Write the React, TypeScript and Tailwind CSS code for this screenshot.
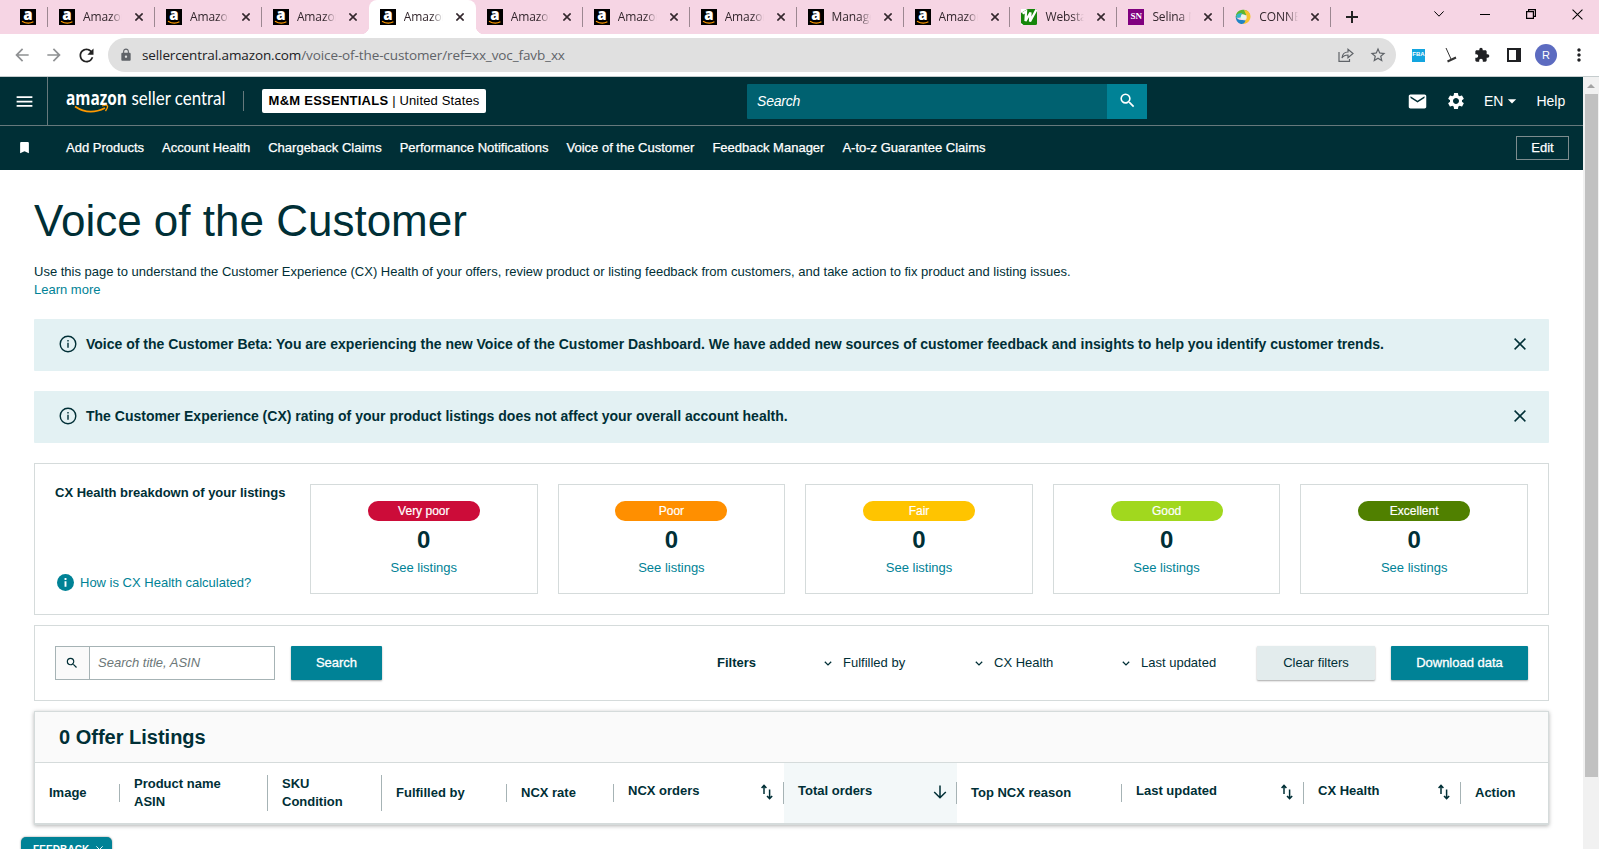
import type { ReactNode } from "react";
import clsx from "clsx";
import {
  MdArrowBack,
  MdArrowForward,
  MdRefresh,
  MdLock,
  MdStarBorder,
  MdExtension,
  MdMoreVert,
  MdMenu,
  MdBookmark,
  MdSearch,
  MdEmail,
  MdSettings,
  MdArrowDropDown,
} from "react-icons/md";

type TabIcon = "amazon" | "webstaurant" | "selina" | "connect";

const TABS: { title: string; icon: TabIcon; active?: boolean; noDivider?: boolean }[] = [
  { title: "Amazon", icon: "amazon" },
  { title: "Amazon", icon: "amazon" },
  { title: "Amazon", icon: "amazon", noDivider: true },
  { title: "Amazon", icon: "amazon", active: true },
  { title: "Amazon", icon: "amazon" },
  { title: "Amazon", icon: "amazon" },
  { title: "Amazon", icon: "amazon" },
  { title: "Manage", icon: "amazon" },
  { title: "Amazon", icon: "amazon" },
  { title: "Webstau", icon: "webstaurant" },
  { title: "Selina N", icon: "selina" },
  { title: "CONNE", icon: "connect" },
];

const NAV_LINKS = [
  "Add Products",
  "Account Health",
  "Chargeback Claims",
  "Performance Notifications",
  "Voice of the Customer",
  "Feedback Manager",
  "A-to-z Guarantee Claims",
];

const RATINGS = [
  { label: "Very poor", color: "bg-[#cc0c39]" },
  { label: "Poor", color: "bg-[#ff8f00]" },
  { label: "Fair", color: "bg-[#ffc400]" },
  { label: "Good", color: "bg-[#a1d81e]" },
  { label: "Excellent", color: "bg-[#508000]" },
];

function Favicon({ icon }: { icon: TabIcon }) {
  if (icon === "selina") {
    return (
      <span className="flex h-4 w-4 shrink-0 items-center justify-center bg-[#80007f] font-['Liberation_Serif',serif] text-[9px] font-bold text-white">
        SN
      </span>
    );
  }
  if (icon === "webstaurant") {
    return (
      <svg viewBox="0 0 16 16" className="h-4 w-4 shrink-0">
        <rect width="16" height="16" rx="1.500" fill="#16860a" />
        <path d="M0 4L6.500 0H0z" fill="#fff" />
        <path d="M1.500 4.500L5 2.500 4.500 12 9.500 3.500 9 12.500 15.500.5" fill="none" stroke="#fff" strokeWidth="2.300" />
        <path d="M0 14l2.500 2H0z" fill="#fff" />
      </svg>
    );
  }
  if (icon === "connect") {
    return (
      <svg viewBox="0 0 16 16" className="h-4 w-4 shrink-0">
        <path d="M1 9C0 4 4 0 9 .8c3 .3 4.500 2 5.500 4L10 6.500 7 5 3 7z" fill="#5cb531" />
        <path d="M9 1c4 0 6.500 3 6.500 6.500C15.500 12 12 15 8 15l1-3c3-1 3.500-4 2-6.500z" fill="#f5c32c" />
        <path d="M.8 7C2 10 4 11.500 7.500 11l3 .5C10 14 8 15.500 6 15 2.500 14 .5 11 .8 7z" fill="#1f83c4" />
        <path d="M1 6.500Q3 3.500 7 4L5.500 8.500 2.500 9z" fill="#35b5c9" />
        <circle cx="8.500" cy="8" r="2.600" fill="#e9f5ef" />
      </svg>
    );
  }
  return (
    <svg viewBox="0 0 16 16" className="h-4 w-4 shrink-0 overflow-visible">
      <rect width="16" height="16" />
      <text x="8" y="11.2" textAnchor="middle" fill="#fff" fontFamily="Open Sans, sans-serif" fontWeight="800" fontSize="15">
        a
      </text>
      <path d="M2 12.2q6 3.6 11.4.6" fill="none" stroke="#f90" strokeWidth="1.2" />
    </svg>
  );
}

function Cross({ className, width = 1.5 }: { className?: string; width?: number }) {
  return (
    <svg viewBox="0 0 12 12" className={className} fill="none" stroke="currentColor" strokeWidth={width}>
      <path d="M.6.6l10.8 10.8M11.4.6L.6 11.4" />
    </svg>
  );
}

function TabStrip() {
  return (
    <div className="flex h-[34px] bg-[#f6d5e4] font-['Open_Sans',sans-serif] text-[12px] text-[#33272d]">
      <div className="flex w-[48px] items-center pl-5">
        <Favicon icon="amazon" />
        <span className="ml-[11px] h-5 w-px shrink-0 bg-[#9c8791]" />
      </div>
      {TABS.map((tab, i) => (
        <div
          key={i}
          className={clsx(
            "relative flex w-[106.95px] shrink-0 items-center pl-[11px]",
            tab.active && "rounded-t-lg bg-white"
          )}
        >
          {tab.active && (
            <>
              <span className="absolute bottom-0 -left-2 h-2 w-2 bg-[radial-gradient(circle_at_0_0,#f6d5e4_8px,#fff_8.5px)]" />
              <span className="absolute -right-2 bottom-0 h-2 w-2 bg-[radial-gradient(circle_at_100%_0,#f6d5e4_8px,#fff_8.5px)]" />
            </>
          )}
          <Favicon icon={tab.icon} />
          <span className="ml-2 w-[39px] overflow-hidden whitespace-nowrap tracking-[-0.1px] [mask-image:linear-gradient(to_right,#000_70%,transparent)]">
            {tab.title}
          </span>
          <Cross className="ml-[13px] h-2 w-2 shrink-0" width={2.4} />
          {!tab.active && !tab.noDivider && (
            <span className="absolute right-0 h-5 w-px bg-[#9c8791]" />
          )}
        </div>
      ))}
      <svg viewBox="0 0 12 12" className="ml-[15px] h-3 w-3 self-center" stroke="#222" strokeWidth="2">
        <path d="M6 0v12M0 6h12" />
      </svg>
      <div className="ml-auto flex h-7 items-center pr-4 text-black">
        <svg viewBox="0 0 10 6" className="h-1.5 w-2.5" fill="none" stroke="currentColor" strokeWidth="1">
          <path d="M.4.4L5 5.2 9.6.4" />
        </svg>
        <span className="ml-9 h-px w-2.5 bg-black" />
        <svg viewBox="0 0 10 10" className="ml-9 h-2.5 w-2.5" fill="none" stroke="currentColor" strokeWidth="1.2">
          <path d="M.6 2.6h6.8v6.8H.6zM2.6 2.6v-2h6.8v6.8H7.4" />
        </svg>
        <Cross className="ml-9 h-[11px] w-[11px]" width={1.1} />
      </div>
    </div>
  );
}

function Toolbar() {
  return (
    <div className="flex h-[43px] items-center border-b border-[#c5cccd] bg-white pl-3">
      <MdArrowBack className="h-5 w-5 text-[#8f9193]" />
      <MdArrowForward className="ml-3 h-5 w-5 text-[#8f9193]" />
      <MdRefresh className="ml-3 h-[21px] w-[21px] text-[#222]" />
      <div className="ml-[11px] flex h-[34px] w-[1288px] items-center rounded-full bg-[#e0e0e0] pr-[9px] pl-[11px] font-['Open_Sans',sans-serif]">
        <MdLock className="h-[14px] w-[14px] text-[#5f6368]" />
        <span className="ml-[9px] text-[13.5px] tracking-[-0.11px] text-[#202124]">
          sellercentral.amazon.com
          <span className="text-[#5f6368]">/voice-of-the-customer/ref=xx_voc_favb_xx</span>
        </span>
        <svg viewBox="0 0 16 16" className="mr-[15px] ml-auto h-4 w-4" fill="none" stroke="#5f6368" strokeWidth="1.2">
          <path d="M1 5v9.4h10.500V12" />
          <path d="M4 11c.4-4 2.600-6 6-6V2.200l5 4.300-5 4.200V8C7.600 8 5.500 8.600 4 11z" />
        </svg>
        <MdStarBorder className="h-4.5 w-4.5 text-[#5f6368]" />
      </div>
      <span className="ml-4 flex h-[13px] w-[13px] items-start justify-center bg-[#13a5df] pt-px font-['Liberation_Sans',sans-serif] text-[6px] leading-[8px] font-bold text-white">
        FBA
      </span>
      <svg viewBox="0 0 12 16" className="ml-5 h-4 w-3" fill="none" stroke="#333">
        <path d="M1 1l5 11" strokeWidth="1" />
        <path d="M2.500 14.500l8.500-4" strokeWidth="2" />
      </svg>
      <MdExtension className="ml-[17px] h-4 w-4 text-[#1f2023]" />
      <span className="ml-[17px] h-[14px] w-[14px] border-2 border-r-[5px] border-[#1f2023]" />
      <span className="ml-[14px] flex h-[22px] w-[22px] items-center justify-center rounded-full bg-[#5c6bc0] font-['Liberation_Sans',sans-serif] text-[11px] text-white">
        R
      </span>
      <MdMoreVert className="ml-3 h-5 w-5 text-[#1f2023]" />
    </div>
  );
}

function SellerLogo() {
  return (
    <svg viewBox="0 0 162 28" className="ml-[18px] h-7 w-[162px] shrink-0 overflow-visible" fill="#fff">
      <text x="0" y="18" fontFamily="Open Sans, sans-serif" fontSize="19" fontWeight="700" textLength="61" lengthAdjust="spacingAndGlyphs">
        amazon
      </text>
      <text x="65.500" y="18" fontFamily="Lato, sans-serif" fontSize="20" textLength="94" lengthAdjust="spacingAndGlyphs">
        seller central
      </text>
      <path d="M9 19.500q14 9.500 30 1.500" fill="none" stroke="#f90" strokeWidth="1.800" />
      <path d="M36 19q5-1.500 5.500 0t-2 5" fill="none" stroke="#f90" strokeWidth="1.300" />
    </svg>
  );
}

function SiteHeader() {
  return (
    <header className="bg-[#002f36] text-white">
      <div className="flex h-[49px] items-center border-b border-[#66797c]">
        <div className="flex h-full w-12 items-center justify-center border-r border-[#66797c] pl-px">
          <MdMenu className="h-[21px] w-[21px]" />
        </div>
        <SellerLogo />
        <span className="ml-[15px] h-5 w-px bg-[#66797c]" />
        <div className="ml-[18px] flex h-6 w-[224px] items-center justify-center rounded-[2px] bg-white text-[13px] tracking-[0.15px] whitespace-pre text-black">
          <b className="tracking-[0.25px]">M&amp;M ESSENTIALS</b> | United States
        </div>
        <div className="ml-[261px] flex h-[35px]">
          <div className="flex w-[360px] items-center rounded-l-[1px] bg-[#006170] pl-2.5 text-[14px] italic tracking-[-0.2px]">Search</div>
          <div className="flex w-10 items-center justify-center bg-[#008296] pb-px">
            <MdSearch className="h-[19px] w-[19px]" />
          </div>
        </div>
        <MdEmail className="ml-[260px] h-[21px] w-[21px]" />
        <MdSettings className="ml-[18px] h-5 w-5" />
        <span className="ml-[18px] text-[14px]">EN</span>
        <MdArrowDropDown className="-ml-px h-5 w-5" />
        <span className="ml-[14px] text-[14px]">Help</span>
      </div>
      <nav className="flex h-[44px] items-center pb-px text-[13px] [-webkit-text-stroke:0.25px_white]">
        <MdBookmark className="mr-[34px] ml-[17px] h-[15px] w-[15px]" />
        <div className="flex gap-[18px]">
          {NAV_LINKS.map((link) => (
            <a key={link}>{link}</a>
          ))}
        </div>
        <button className="mr-[14px] ml-auto h-6 w-[53px] border border-[#7d8c8e]">Edit</button>
      </nav>
    </header>
  );
}

function Banner({ children }: { children: ReactNode }) {
  return (
    <div className="mb-5 flex h-[52px] items-center rounded-[1px] bg-[#e3f1f3] pr-[23px] pb-0.5 pl-[25px]">
      <svg viewBox="0 0 18 18" className="h-[18px] w-[18px] shrink-0" fill="none" stroke="#002f36">
        <circle cx="9" cy="9" r="7.800" strokeWidth="1.400" />
        <path d="M9 7.800v5M9 5v1.500" strokeWidth="1.400" />
      </svg>
      <span className="ml-[9px] text-[14px] font-bold">{children}</span>
      <Cross className="ml-auto h-3 w-3" width={1.5} />
    </div>
  );
}

function HealthBreakdown() {
  return (
    <section className="flex h-[152px] border border-[#d5dbdb] p-5">
      <div className="flex w-[255px] shrink-0 flex-col justify-between">
        <h2 className="text-[13px] leading-[18px] font-bold">CX Health breakdown of your listings</h2>
        <div className="flex items-center pb-0.5 pl-0.5 text-[13px] text-[#008296]">
          <svg viewBox="0 0 16 16" className="mr-[6px] h-[17px] w-[17px]">
            <circle cx="8" cy="8" r="8" fill="#008296" />
            <path d="M8 3.800v1.900M8 6.900v5.200" stroke="#fff" strokeWidth="1.800" />
          </svg>
          How is CX Health calculated?
        </div>
      </div>
      <div className="grid grow grid-cols-5 gap-5">
        {RATINGS.map((rating) => (
          <div key={rating.label} className="flex flex-col items-center border border-[#d5dbdb] pt-4">
            <span className={clsx("h-5 w-28 rounded-full text-center text-[12px] leading-5 text-white [-webkit-text-stroke:0.2px_white]", rating.color)}>
              {rating.label}
            </span>
            <span className="mt-1 text-[24px] leading-[30px] font-bold">0</span>
            <a className="mt-1 text-[13px] leading-[18px] text-[#008296]">See listings</a>
          </div>
        ))}
      </div>
    </section>
  );
}

function FilterMenu({ label, className }: { label: string; className?: string }) {
  return (
    <div className={clsx("flex items-center", className)}>
      <svg viewBox="0 0 8 5" className="mr-[11px] h-[5px] w-2" fill="none" stroke="#002f36" strokeWidth="1.300">
        <path d="M.8.8L4 3.900 7.200.8" />
      </svg>
      {label}
    </div>
  );
}

function FilterBar() {
  return (
    <section className="mt-2.5 flex h-[76px] items-center border border-[#d5dbdb] px-5 text-[13px]">
      <div className="flex h-[34px] w-[220px] border border-[#a6b3b5]">
        <div className="flex w-[34px] items-center justify-center border-r border-[#a6b3b5] bg-[#fafafa] pr-px pb-px">
          <MdSearch className="h-[14px] w-[14px]" />
        </div>
        <div className="flex items-center pl-2 text-[#6c7778] italic">Search title, ASIN</div>
      </div>
      <button className="ml-4 h-[34px] w-[91px] rounded-[1px] bg-[#008296] text-white shadow-[0_1px_2px_rgba(0,0,0,0.35)] [-webkit-text-stroke:0.3px_white]">
        Search
      </button>
      <b className="ml-[335px] w-[107px]">Filters</b>
      <FilterMenu label="Fulfilled by" className="w-[151px]" />
      <FilterMenu label="CX Health" className="w-[147px]" />
      <FilterMenu label="Last updated" />
      <button className="ml-auto h-[34px] w-[118px] rounded-[1px] bg-[#e3eced] shadow-[0_1px_2px_rgba(0,0,0,0.35)]">
        Clear filters
      </button>
      <button className="ml-4 h-[34px] w-[137px] rounded-[1px] bg-[#008296] text-white shadow-[0_1px_2px_rgba(0,0,0,0.35)] [-webkit-text-stroke:0.3px_white]">
        Download data
      </button>
    </section>
  );
}

function SortArrows() {
  return (
    <svg viewBox="0 0 12 16" className="mt-0.5 mr-[10px] h-4 w-3" fill="none" stroke="#002f36" strokeWidth="1.500">
      <path d="M3 10V2M.6 4L3 1.400 5.400 4M8.600 5.500v8.500M6 12l2.600 2.600L11.200 12" />
    </svg>
  );
}

function Column({ label, width, sort, last }: { label: ReactNode; width: string; sort?: "both" | "down"; last?: boolean }) {
  return (
    <div className={clsx("flex h-full shrink-0 items-center", width, sort === "down" && "bg-[#f3f8f9]")}>
      <div
        className={clsx(
          "flex grow justify-between pl-[14px] leading-[18px]",
          !last && "border-r border-[#a6b3b5]",
          sort && "h-[22px]"
        )}
      >
        <span>{label}</span>
        {sort === "both" && <SortArrows />}
        {sort === "down" && (
          <svg viewBox="0 0 14 14" className="mt-[3px] mr-[9px] h-[14px] w-[14px]" fill="none" stroke="#002f36" strokeWidth="1.500">
            <path d="M7 .5v12M1.200 7L7 12.800 12.800 7" />
          </svg>
        )}
      </div>
    </div>
  );
}

function ListingsTable() {
  return (
    <section className="mt-2.5 border border-b-2 border-[#d5dbdb] shadow-[0_1px_4px_rgba(0,0,0,0.3)]">
      <h2 className="flex h-[51px] items-center border-b border-[#d5dbdb] bg-[#fafafa] pl-6 text-[20px] font-bold">0 Offer Listings</h2>
      <div className="flex h-[60px] items-center text-[13px] font-bold">
        <Column label="Image" width="w-[85px]" />
        <Column label={<>Product name<br />ASIN</>} width="w-[148px]" />
        <Column label={<>SKU<br />Condition</>} width="w-[114px]" />
        <Column label="Fulfilled by" width="w-[125px]" />
        <Column label="NCX rate" width="w-[107px]" />
        <Column label="NCX orders" width="w-[170px]" sort="both" />
        <Column label="Total orders" width="w-[173px]" sort="down" />
        <Column label="Top NCX reason" width="w-[165px]" />
        <Column label="Last updated" width="w-[182px]" sort="both" />
        <Column label="CX Health" width="w-[157px]" sort="both" />
        <Column label="Action" width="w-[87px]" last />
      </div>
    </section>
  );
}

export default function App() {
  return (
    <div className="flex h-[849px] w-[1599px] flex-col overflow-hidden bg-white font-['Liberation_Sans',Arial,sans-serif] text-[#002f36]">
      <TabStrip />
      <Toolbar />
      <div className="flex grow overflow-hidden">
        <div className="relative w-[1583px] shrink-0">
          <SiteHeader />
          <main className="px-[34px]">
            <h1 className="pt-[23px] text-[44px] leading-[56px]">Voice of the Customer</h1>
            <p className="mt-[14px] mb-5 text-[13px] leading-[18px]">
              Use this page to understand the Customer Experience (CX) Health of your offers, review product or listing feedback from
              customers, and take action to fix product and listing issues.
              <br />
              <a className="text-[#008296]">Learn more</a>
            </p>
            <Banner>
              Voice of the Customer Beta: You are experiencing the new Voice of the Customer Dashboard. We have added new sources of
              customer feedback and insights to help you identify customer trends.
            </Banner>
            <Banner>The Customer Experience (CX) rating of your product listings does not affect your overall account health.</Banner>
            <HealthBreakdown />
            <FilterBar />
            <ListingsTable />
          </main>
          {/* feedback tab pinned to the bottom edge */}
          <div className="absolute top-[760px] left-[21px] flex h-6 w-[91px] items-center rounded-t-[5px] bg-[#008296] pl-3 text-[10px] font-bold tracking-[0.1px] text-white shadow-[0_0_2px_rgba(0,0,0,0.5)]">
            FEEDBACK
            <Cross className="ml-[7px] h-[7px] w-[7px]" width={1.6} />
          </div>
        </div>
        <div className="flex w-4 flex-col items-center bg-[#f1f1f1]">
          <span className="mt-[7px] mb-1.5 h-0 w-0 border-x-4 border-b-4 border-x-transparent border-b-[#a3a3a3]" />
          <span className="h-[683px] w-[13px] bg-[#c1c1c1]" />
        </div>
      </div>
    </div>
  );
}
